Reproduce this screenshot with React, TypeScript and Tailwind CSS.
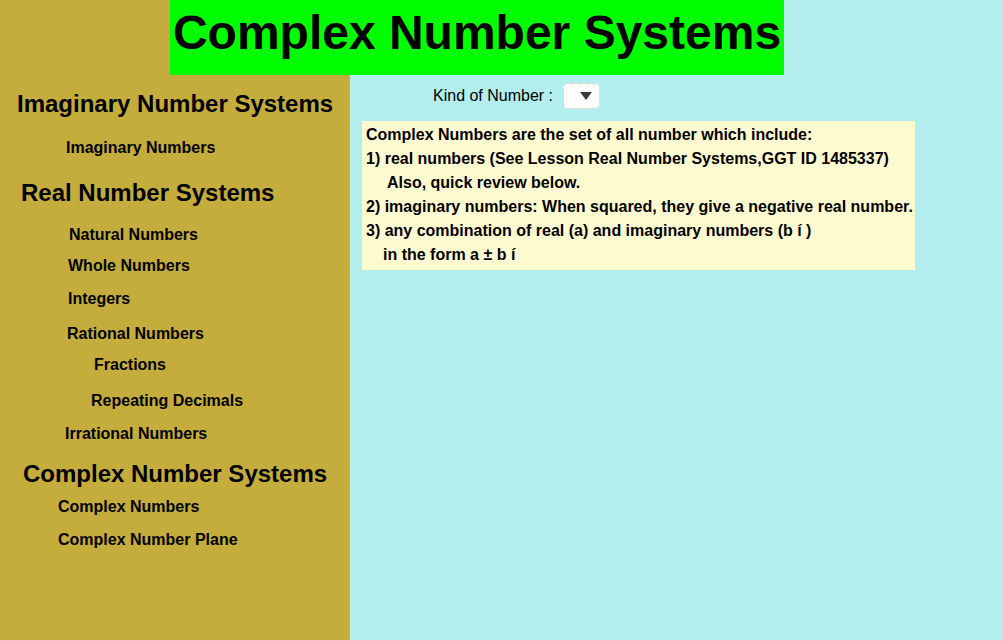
const items = [
  { label: "Imaginary Number Systems", cls: "mt-[15px] pl-[17px] text-[24px] leading-[28px]" },
  { label: "Imaginary Numbers", cls: "mt-[19px] pl-[66px] pt-[2px] text-[16px] leading-[18px]" },
  { label: "Real Number Systems", cls: "mt-[22px] pl-[21px] text-[24px] leading-[28px]" },
  { label: "Natural Numbers", cls: "mt-[17px] pl-[69px] pt-[2px] text-[16px] leading-[18px]" },
  { label: "Whole Numbers", cls: "mt-[11px] pl-[68px] pt-[2px] text-[16px] leading-[18px]" },
  { label: "Integers", cls: "mt-[13px] pl-[68px] pt-[2px] text-[16px] leading-[18px]" },
  { label: "Rational Numbers", cls: "mt-[15px] pl-[67px] pt-[2px] text-[16px] leading-[18px]" },
  { label: "Fractions", cls: "mt-[11px] pl-[94px] pt-[2px] text-[16px] leading-[18px]" },
  { label: "Repeating Decimals", cls: "mt-[16px] pl-[91px] pt-[2px] text-[16px] leading-[18px]" },
  { label: "Irrational Numbers", cls: "mt-[13px] pl-[65px] pt-[2px] text-[16px] leading-[18px]" },
  { label: "Complex Number Systems", cls: "mt-[17px] pl-[23px] text-[24px] leading-[28px]" },
  { label: "Complex Numbers", cls: "mt-[8px] pl-[58px] pt-[2px] text-[16px] leading-[18px]" },
  { label: "Complex Number Plane", cls: "mt-[13px] pl-[58px] pt-[2px] text-[16px] leading-[18px]" },
];

const lines = [
  { text: "Complex Numbers are the set of all number which include:", cls: "" },
  { text: "1) real numbers (See Lesson Real Number Systems,GGT ID 1485337)", cls: "" },
  { text: "Also, quick review below.", cls: "pl-[21px]" },
  { text: "2) imaginary numbers: When squared, they give a negative real number.", cls: "" },
  { text: "3) any combination of real (a) and imaginary numbers (b \u00ed )", cls: "" },
  { text: "in the form a \u00b1 b \u00ed", cls: "pl-[17px]" },
];

export default function App() {
  return (
    <div className="flex h-[640px] w-[1003px] flex-col overflow-hidden font-['Liberation_Sans',Arial,sans-serif] text-black">
      {/* header row */}
      <div className="flex h-[75px] shrink-0">
        <div className="w-[170px] bg-[#c4ad3c]" />
        <div className="flex w-[614px] items-center justify-center bg-[#00ff00] pb-[10px]">
          <h1 className="text-[48px] font-bold leading-[56px]">Complex Number Systems</h1>
        </div>
        <div className="flex-1 bg-[#b2eeee]" />
      </div>

      <div className="flex flex-1">
        {/* sidebar */}
        <div className="flex w-[350px] flex-col border-r border-[#d2b043] bg-[#c4ad3c] font-bold">
          {items.map((it) => (
            <div key={it.label} className={it.cls}>
              {it.label}
            </div>
          ))}
        </div>

        {/* main */}
        <div className="flex-1 bg-[#b2eeee] pl-[12px]">
          <div className="mt-[8px] flex items-center pl-[71px]">
            <span className="text-[16px] leading-[26px]">Kind of Number :</span>
            <div className="ml-[10px] flex h-[26px] w-[37px] items-center justify-end rounded-[5px] border border-dotted border-[#c8c8b8] bg-white pr-[7px]">
              <svg width="12" height="8" viewBox="0 0 12 8">
                <path d="M0 0 L12 0 L6 8 Z" fill="#3a3a32" />
              </svg>
            </div>
          </div>
          <div className="mt-[12px] w-[553px] bg-[#fffad0] pb-[3px] pl-[4px] pt-[2px] text-[16px] font-bold leading-[24px]">
            {lines.map((l) => (
              <div key={l.text} className={l.cls}>
                {l.text}
              </div>
            ))}
          </div>
        </div>
      </div>
    </div>
  );
}
